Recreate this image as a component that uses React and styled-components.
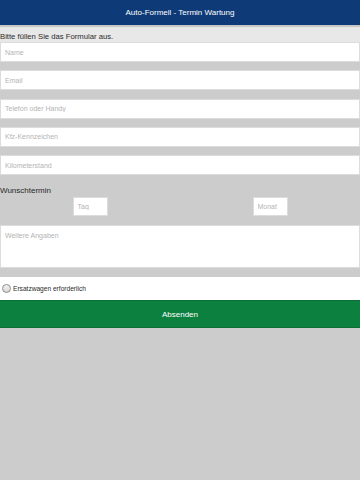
import React from "react";
import styled, { createGlobalStyle } from "styled-components";

const GlobalStyle = createGlobalStyle`
  html, body {
    margin: 0;
    padding: 0;
    background: #cccccc;
    font-family: "Liberation Sans", Arial, sans-serif;
  }
`;

const Page = styled.div`
  min-height: 100vh;
  background: #cccccc;
  display: flex;
  flex-direction: column;
`;

const Header = styled.header`
  height: 25px;
  background: #0e3a78;
  color: #ffffff;
  font-size: 8px;
  display: flex;
  align-items: center;
  justify-content: center;
`;

const Intro = styled.div`
  background: #e8e8e8;
  border-top: 2px solid #c6c6c6;
  font-size: 7.7px;
  color: #2a2a2a;
  display: flex;
  align-items: flex-end;
  padding-bottom: 1px;
  box-sizing: border-box;
  height: 17px;
`;

const Fields = styled.div`
  display: flex;
  flex-direction: column;
  gap: 8.3px;
`;

const Field = styled.input`
  box-sizing: border-box;
  width: 100%;
  height: 20px;
  margin: 0;
  border: 1px solid #dcdcdc;
  background: #ffffff;
  padding: 0 4px;
  font-family: inherit;
  font-size: 7px;
  outline: none;

  &::placeholder {
    color: #b4b4b4;
  }
`;

const Area = styled.textarea`
  box-sizing: border-box;
  width: 100%;
  height: 43px;
  margin: 9px 0 0;
  border: 1px solid #dcdcdc;
  background: #ffffff;
  padding: 6px 4px;
  font-family: inherit;
  font-size: 7px;
  resize: none;
  outline: none;
  display: block;

  &::placeholder {
    color: #b4b4b4;
  }
`;

const Label = styled.div`
  font-size: 8px;
  color: #2a2a2a;
  margin-top: 11px;
  height: 10px;
`;

const DateRow = styled.div`
  display: grid;
  grid-template-columns: 1fr 1fr;
  margin-top: 1px;
  justify-items: center;
`;

const DateBox = styled(Field)`
  width: 35px;
  height: 19px;
`;

const CheckRow = styled.label`
  margin-top: 9px;
  height: 23px;
  background: #ffffff;
  display: flex;
  align-items: center;
  gap: 2px;
  padding-left: 2px;
  font-size: 6.6px;
  color: #2a2a2a;
`;

const Check = styled.input`
  appearance: none;
  margin: 0;
  width: 9px;
  height: 9px;
  border-radius: 50%;
  border: 1px solid #8a8a8a;
  background: linear-gradient(#f4f4f4, #d6d6d6);
  box-sizing: border-box;
`;

const Submit = styled.button`
  height: 28px;
  border: none;
  border-top: 1px solid #0a6e36;
  border-bottom: 1px solid #0a6e36;
  background: #0b803f;
  color: #ffffff;
  font-family: inherit;
  font-size: 8px;
  padding: 0;
`;

export default function App() {
  const fields = [
    "Name",
    "Email",
    "Telefon oder Handy",
    "Kfz-Kennzeichen",
    "Kilometerstand",
  ];

  return (
    <Page>
      <GlobalStyle />
      <Header>Auto-Formell - Termin Wartung</Header>
      <Intro>Bitte füllen Sie das Formular aus.</Intro>
      <Fields>
        {fields.map((f) => (
          <Field key={f} placeholder={f} />
        ))}
      </Fields>
      <Label>Wunschtermin</Label>
      <DateRow>
        <DateBox placeholder="Tag" />
        <DateBox placeholder="Monat" />
      </DateRow>
      <Area placeholder="Weitere Angaben" />
      <CheckRow>
        <Check type="checkbox" />
        Ersatzwagen erforderlich
      </CheckRow>
      <Submit>Absenden</Submit>
    </Page>
  );
}
